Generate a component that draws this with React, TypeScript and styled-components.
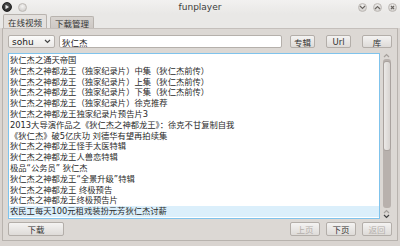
import React from "react";
import styled, { createGlobalStyle } from "styled-components";

const GlobalStyle = createGlobalStyle`
  html, body {
    margin: 0;
    padding: 0;
    background: #d4cfcb;
  }
  body {
    font-family: "DejaVu Sans", "Noto Sans CJK SC", sans-serif;
  }
`;

const CJK = `"DejaVu Sans", "Noto Sans CJK SC", sans-serif`;

const Window = styled.div`
  position: relative;
  width: 400px;
  height: 246px;
  display: flex;
  flex-direction: column;
  background: #d9d4d0;
  overflow: hidden;
`;

const TitleBar = styled.div`
  height: 14px;
  display: flex;
  align-items: center;
  justify-content: space-between;
  padding: 0 3px 0 2px;
  background: linear-gradient(#f2f1f0, #e9e8e6);
`;

const Title = styled.div`
  font-family: "DejaVu Sans", sans-serif;
  font-size: 9px;
  color: #3c3c3c;
  position: absolute;
  left: 0;
  right: 0;
  top: 2px;
  text-align: center;
  pointer-events: none;
`;

const Controls = styled.div<{ $gap: number }>`
  display: flex;
  align-items: center;
  gap: ${(p) => p.$gap}px;
`;

const Dot = styled.div<{ $size: number; $dark?: boolean }>`
  width: ${(p) => p.$size}px;
  height: ${(p) => p.$size}px;
  border-radius: 50%;
  display: flex;
  align-items: center;
  justify-content: center;
  background: ${(p) =>
    p.$dark
      ? "radial-gradient(circle at 50% 35%, #555, #1d1d1d)"
      : "radial-gradient(circle at 50% 35%, #f4f3f2, #c9c6c3)"};
  border: 1px solid ${(p) => (p.$dark ? "#222" : "#bdb9b5")};
  box-sizing: border-box;
`;

const TabBar = styled.div`
  height: 14px;
  display: flex;
  align-items: flex-end;
  padding-left: 3px;
  gap: 3px;
  background: #e9e8e6;
`;

const Tab = styled.div<{ $active?: boolean }>`
  height: ${(p) => (p.$active ? 14 : 12)}px;
  padding: 0 4px;
  box-sizing: border-box;
  display: flex;
  align-items: center;
  font-family: ${CJK};
  font-size: 8.5px;
  color: #333;
  border: 1px solid #b8b3ae;
  border-bottom: none;
  border-radius: 2px 2px 0 0;
  background: ${(p) => (p.$active ? "#e4e1de" : "linear-gradient(#d8d4d0, #cdc8c4)")};
`;

const Panel = styled.div`
  flex: 1;
  margin: 0 2px 5px 2px;
  border: 1px solid #b8b3ae;
  border-top-color: #c4bfbb;
  background: #dcd8d4;
  padding: 6px 5px 4px 5px;
  display: flex;
  flex-direction: column;
  gap: 5px;
`;

const Toolbar = styled.div`
  display: flex;
  align-items: center;
  height: 13px;
`;

const Spacer = styled.div<{ $w?: number }>`
  ${(p) => (p.$w ? `width: ${p.$w}px;` : "flex: 1;")}
`;

const Combo = styled.div`
  width: 47px;
  height: 13px;
  box-sizing: border-box;
  border: 1px solid #b5b0ab;
  border-radius: 2px;
  background: linear-gradient(#fbfbfa, #ebe9e7);
  display: flex;
  align-items: center;
  justify-content: space-between;
  padding: 0 3px 0 3px;
  font-family: ${CJK};
  font-size: 9px;
  color: #222;
  margin-right: 4px;
`;

const Input = styled.div`
  width: 223px;
  height: 13px;
  box-sizing: border-box;
  border: 1px solid #b5b0ab;
  border-radius: 2px;
  background: #fff;
  padding-left: 2px;
  display: flex;
  align-items: center;
  font-family: ${CJK};
  font-size: 8.5px;
  color: #222;
`;

const Button = styled.div<{ $w: number; $h?: number; $disabled?: boolean }>`
  width: ${(p) => p.$w}px;
  height: ${(p) => p.$h ?? 13}px;
  box-sizing: border-box;
  border: 1px solid #b3aea9;
  border-radius: 2px;
  background: linear-gradient(#f4f3f2, #dedbd8);
  display: flex;
  align-items: center;
  justify-content: center;
  font-family: ${CJK};
  font-size: 8.5px;
  color: ${(p) => (p.$disabled ? "#b4afab" : "#333")};
`;

const ListRow = styled.div`
  display: flex;
  height: 166px;
`;

const List = styled.div`
  width: 376px;
  box-sizing: border-box;
  border: 1px solid #7fc3ec;
  background: #fff;
  padding: 1px 0 0 0;
  display: flex;
  flex-direction: column;
`;

const Item = styled.div<{ $selected?: boolean }>`
  height: 10.8px;
  line-height: 10.8px;
  padding-left: 1px;
  font-family: ${CJK};
  font-size: 8.3px;
  color: #2a2a2a;
  white-space: nowrap;
  background: ${(p) => (p.$selected ? "#dbeffb" : "transparent")};
`;

const ScrollBar = styled.div`
  width: 11px;
  margin-left: 1px;
  display: flex;
  flex-direction: column;
  align-items: center;
`;

const Trough = styled.div`
  flex: 1;
  width: 8px;
  margin: 1px 0;
  border-radius: 3px;
  background: #b8b1ad;
  box-sizing: border-box;
  padding-top: 2px;
`;

const Thumb = styled.div`
  width: 8px;
  height: 90px;
  box-sizing: border-box;
  border: 1px solid #a9a29e;
  border-radius: 3px;
  background: linear-gradient(90deg, #ebe9e7, #d8d4d1);
`;

const BottomBar = styled.div`
  display: flex;
  align-items: center;
  justify-content: space-between;
  margin-top: -2px;
`;

const RightButtons = styled.div`
  display: flex;
  gap: 6px;
`;

const Chevron = ({ dir, color = "#555" }: { dir: "up" | "down"; color?: string }) => (
  <svg width="7" height="5" viewBox="0 0 7 5">
    <path
      d={dir === "down" ? "M1 1 L3.5 3.5 L6 1" : "M1 4 L3.5 1.5 L6 4"}
      fill="none"
      stroke={color}
      strokeWidth="1.2"
    />
  </svg>
);

const items = [
  "狄仁杰之通天帝国",
  "狄仁杰之神都龙王（独家纪录片）中集（狄仁杰前传）",
  "狄仁杰之神都龙王（独家纪录片）上集（狄仁杰前传）",
  "狄仁杰之神都龙王（独家纪录片）下集（狄仁杰前传）",
  "狄仁杰之神都龙王（独家纪录片）徐克推荐",
  "狄仁杰之神都龙王独家纪录片预告片3",
  "2013大导演作品之《狄仁杰之神都龙王》：徐克不甘复制自我",
  "《狄仁杰》破5亿庆功 刘德华有望再拍续集",
  "狄仁杰之神都龙王怪手太医特辑",
  "狄仁杰之神都龙王人兽恋特辑",
  "极品“公务员” 狄仁杰",
  "狄仁杰之神都龙王“全景升级”特辑",
  "狄仁杰之神都龙王 终极预告",
  "狄仁杰之神都龙王终极预告片",
  "农民工每天100元租戏装扮元芳狄仁杰讨薪",
];

export default function App() {
  return (
    <>
      <GlobalStyle />
      <Window>
        <TitleBar>
          <Controls $gap={6}>
            <Dot $size={10} $dark>
              <svg width="6" height="6" viewBox="0 0 6 6">
                <path d="M1.5 0.8 L5 3 L1.5 5.2 Z" fill="#e8e8e8" />
              </svg>
            </Dot>
            <Dot $size={9} />
          </Controls>
          <Title>funplayer</Title>
          <Controls $gap={6}>
            <Dot $size={9}>
              <Chevron dir="down" color="#6a6662" />
            </Dot>
            <Dot $size={9}>
              <Chevron dir="up" color="#6a6662" />
            </Dot>
            <Dot $size={9}>
              <svg width="5" height="5" viewBox="0 0 5 5">
                <path d="M1 1 L4 4 M4 1 L1 4" stroke="#6a6662" strokeWidth="1.2" />
              </svg>
            </Dot>
          </Controls>
        </TitleBar>
        <TabBar>
          <Tab $active>在线视频</Tab>
          <Tab>下载管理</Tab>
        </TabBar>
        <Panel>
          <Toolbar>
            <Combo>
              <span>sohu</span>
              <Chevron dir="down" color="#444" />
            </Combo>
            <Input>狄仁杰</Input>
            <Spacer />
            <Button $w={25}>专辑</Button>
            <Spacer $w={11} />
            <Button $w={25}>Url</Button>
            <Spacer $w={11} />
            <Button $w={30}>库</Button>
          </Toolbar>
          <ListRow>
            <List>
              {items.map((t, i) => (
                <Item key={i} $selected={i === items.length - 1}>
                  {t}
                </Item>
              ))}
            </List>
            <ScrollBar>
              <Chevron dir="up" color="#a5a09c" />
              <Trough>
                <Thumb />
              </Trough>
              <Chevron dir="up" color="#a5a09c" />
              <Chevron dir="down" color="#444" />
            </ScrollBar>
          </ListRow>
          <BottomBar>
            <Button $w={56} $h={14}>下载</Button>
            <RightButtons>
              <Button $w={30} $h={14} $disabled>
                上页
              </Button>
              <Button $w={30} $h={14}>下页</Button>
              <Button $w={30} $h={14} $disabled>
                返回
              </Button>
            </RightButtons>
          </BottomBar>
        </Panel>
      </Window>
    </>
  );
}
